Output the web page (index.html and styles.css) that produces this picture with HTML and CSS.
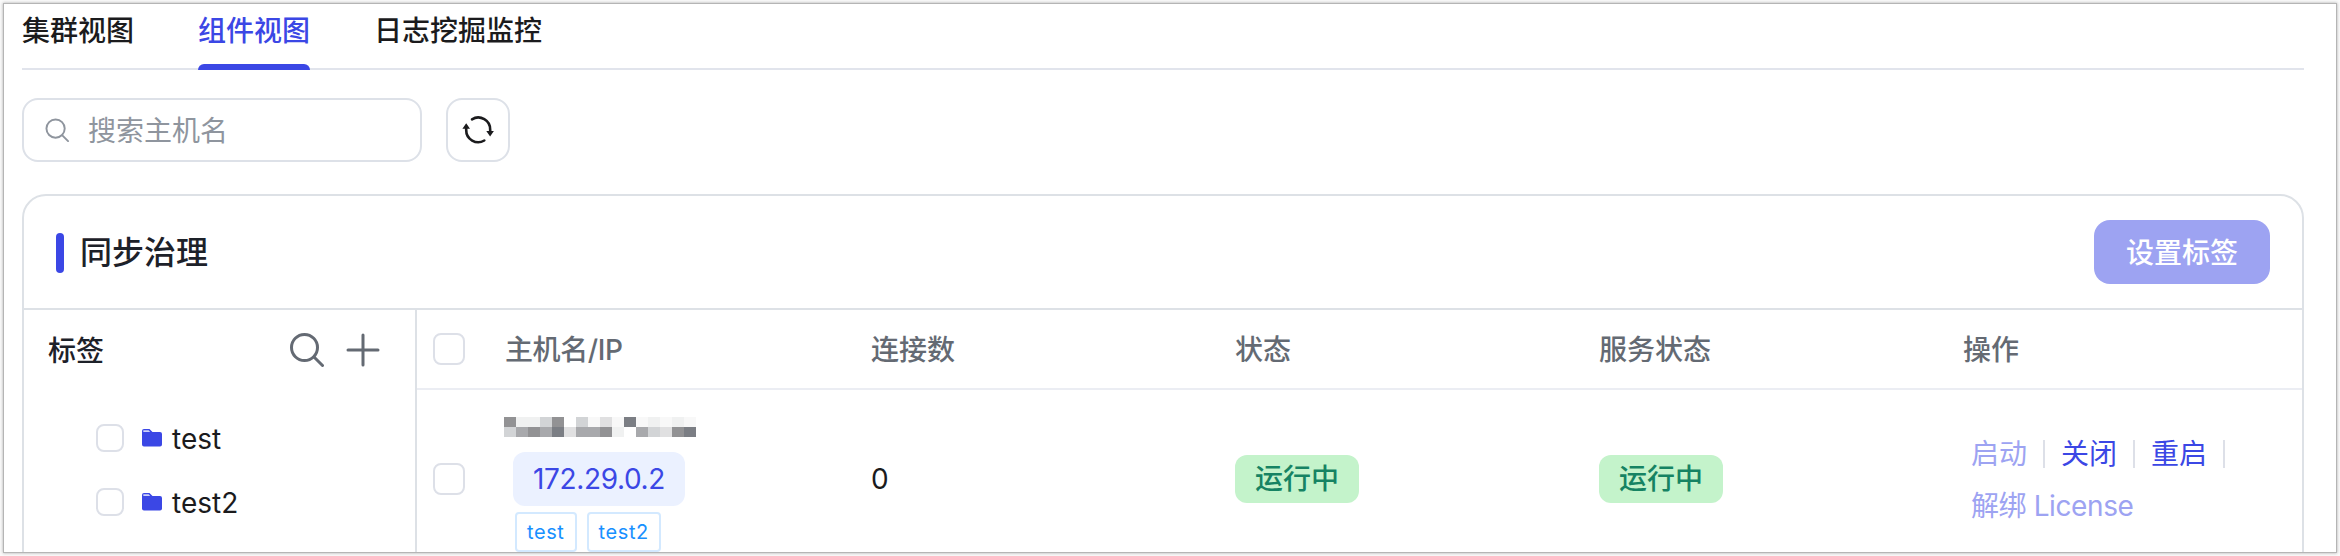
FILE: index.html
```html
<!DOCTYPE html>
<html lang="zh-CN">
<head>
<meta charset="utf-8">
<title>组件视图</title>
<link rel="stylesheet" href="styles.css">
</head>
<body>
<div class="window">
  <nav class="tabs">
    <a class="tab">集群视图</a>
    <a class="tab active">组件视图</a>
    <a class="tab">日志挖掘监控</a>
  </nav>
  <div class="toolbar">
    <div class="search">
      <svg class="search-icon" viewBox="0 0 26 26"><circle cx="11" cy="11" r="9.500"/><path d="M18 18l6 6"/></svg>
      <span>搜索主机名</span>
    </div>
    <button class="refresh">
      <svg viewBox="0 0 32 32"><path class="arc" d="M10 5.300A12 12 0 0 1 28.200 16v2M22.300 26.500A12 12 0 0 1 4.200 16v-2"/><path class="head" d="M24.300 17h7.600L28.100 22.500zM.4 14.800H8L4.200 9.300z"/></svg>
    </button>
  </div>
  <section class="card">
    <header class="card-head">
      <h2>同步治理</h2>
      <button class="primary">设置标签</button>
    </header>
    <div class="card-body">
      <aside class="tree">
        <div class="tree-head">
          <b>标签</b>
          <svg class="tool" viewBox="0 0 34 34"><circle cx="14.500" cy="14.500" r="13"/><path d="M24 24l8.500 8.500"/></svg>
          <svg class="tool" viewBox="0 0 34 34"><path d="M17 2v30M2 17h30"/></svg>
        </div>
        <div class="node"><i class="check small"></i><svg class="folder" viewBox="0 0 20 18"><path d="M0 2Q0 0 2 0h5.500l3 3H18q2 0 2 2v10.500q0 2-2 2H2q-2 0-2-2z"/><path class="flap" d="M1.300 1.300h5.400l1.500 1.700H1.300z"/></svg><span>test</span></div>
        <div class="node"><i class="check small"></i><svg class="folder" viewBox="0 0 20 18"><path d="M0 2Q0 0 2 0h5.500l3 3H18q2 0 2 2v10.500q0 2-2 2H2q-2 0-2-2z"/><path class="flap" d="M1.300 1.300h5.400l1.500 1.700H1.300z"/></svg><span>test2</span></div>
      </aside>
      <div class="table">
        <div class="row head-row">
          <i class="check"></i><span class="tight">主机名/IP</span><span>连接数</span><span>状态</span><span>服务状态</span><span>操作</span>
        </div>
        <div class="row data-row">
          <i class="check"></i>
          <div class="host">
            <svg class="mask" viewBox="0 0 192 20" shape-rendering="crispEdges">
              <g fill="#929294"><path d="M0 0h12v10H0z"/><path d="M48 0h12v10H48z"/><path d="M24 10h12v10H24z"/><path d="M96 10h12v10H96z"/><path d="M168 10h12v10h-12z"/></g>
              <g fill="#7b7e84"><path d="M120 0h12v10h-12z"/><path d="M48 10h12v10H48z"/><path d="M180 10h12v10h-12z"/></g>
              <g fill="#a8a9ac"><path d="M12 10h12v10H12z"/><path d="M36 10h12v10H36z"/><path d="M72 10h24v10H72z"/><path d="M132 10h12v10h-12z"/></g>
              <g fill="#d2d4d6"><path d="M36 0h12v10H36z"/><path d="M72 0h12v10H72z"/><path d="M0 10h12v10H0z"/><path d="M144 10h12v10h-12z"/></g>
              <g fill="#e0e0e1"><path d="M96 0h12v10H96z"/><path d="M60 10h12v10H60z"/><path d="M156 10h12v10h-12z"/></g>
              <g fill="#f0f1f1"><path d="M12 0h24v10H12z"/><path d="M144 0h12v10h-12z"/><path d="M168 0h12v10h-12z"/><path d="M108 10h12v10h-12z"/></g>
              <g fill="#f8f8f8"><path d="M84 0h12v10H84z"/><path d="M108 0h12v10h-12z"/><path d="M132 0h12v10h-12z"/><path d="M156 0h12v10h-12z"/><path d="M180 0h12v10h-12z"/></g>
            </svg>
            <span class="ip">172.29.0.2</span>
            <div class="labels"><span class="label">test</span><span class="label">test2</span></div>
          </div>
          <span>0</span>
          <span><em class="status">运行中</em></span>
          <span><em class="status">运行中</em></span>
          <div class="actions">
            <div class="line"><a class="off">启动</a><a>关闭</a><a>重启</a></div>
            <div class="tight"><a class="off">解绑 License</a></div>
          </div>
        </div>
      </div>
    </div>
  </section>
</div>
</body>
</html>
```
FILE: styles.css
```css
* { box-sizing: border-box; }
body {
  margin: 0;
  height: 556px;
  padding: 4px;
  overflow: hidden;
  background: #fafafa;
  color: #1b1b1d;
  font: 28px/40px Inter, "Noto Sans CJK SC", sans-serif;
}
button { border: 0; padding: 0; font: inherit; }
svg { display: block; flex: none; fill: none; }
.window {
  height: 548px;
  padding: 0 32px 0 18px;
  overflow: hidden;
  background: #fff;
  box-shadow: 0 0 0 1px #b5b5b5, 0 0 3px 1px #aaa;
}
.tabs {
  display: flex;
  gap: 64px;
  height: 66px;
  border-bottom: 2px solid #e1e4ec;
  font-weight: 500;
}
.tab {
  display: flex;
  flex-direction: column;
  justify-content: space-between;
  height: 66px;
  padding-top: 7px;
}
.tab.active { color: #3b47e5; }
.tab.active::after {
  content: "";
  height: 6px;
  border-radius: 6px 6px 0 0;
  background: #3b47e5;
}
.toolbar { display: flex; gap: 24px; padding: 28px 0 32px; }
.search, .refresh {
  display: flex;
  align-items: center;
  height: 64px;
  border: 2px solid #dde1e8;
  border-radius: 16px;
  background: #fff;
}
.search { width: 400px; gap: 18px; padding-left: 21px; color: #8f959e; }
.search span { padding-top: 1px; }
.search-icon { width: 25px; height: 25px; stroke: #8f959e; stroke-width: 2; stroke-linecap: round; }
.refresh { width: 64px; justify-content: center; }
.refresh svg { width: 32px; height: 32px; }
.arc { stroke: #1b1b1d; stroke-width: 2.6; stroke-linecap: round; }
.head { fill: #1b1b1d; }
.card {
  height: 420px;
  border: 2px solid #dde1e6;
  border-radius: 24px 24px 0 0;
}
.card-head {
  display: flex;
  align-items: center;
  justify-content: space-between;
  height: 114px;
  padding: 0 32px;
  border-bottom: 2px solid #dde1e6;
}
h2 {
  display: flex;
  align-items: center;
  gap: 16px;
  margin: 0;
  padding-top: 1px;
  color: #1d2129;
  font-size: 32px;
  font-weight: 500;
}
h2::before { content: ""; width: 8px; height: 40px; border-radius: 4px; background: #3b47e5; }
.primary {
  width: 176px;
  height: 64px;
  padding-top: 1px;
  border-radius: 16px;
  background: #9da3f2;
  color: #fff;
  font-weight: 500;
}
.card-body { display: flex; height: 320px; }
.tree { width: 393px; border-right: 2px solid #dde1e6; }
.tree-head {
  display: flex;
  align-items: center;
  gap: 22px;
  height: 80px;
  margin-bottom: 16px;
  padding: 0 35px 0 24px;
}
.tree-head b { flex: 1; padding-top: 1px; color: #1d2129; font-weight: 500; }
.tool { width: 34px; height: 34px; stroke: #646a73; stroke-width: 3; stroke-linecap: round; }
.node { display: flex; align-items: center; height: 64px; padding-left: 72px; }
.node span { padding-top: 2px; }
.check {
  flex: none;
  width: 32px;
  height: 32px;
  border: 2px solid #dde0e8;
  border-radius: 8px;
  background: #fff;
}
.check.small { width: 28px; height: 28px; }
.folder { width: 20px; height: 18px; margin: 0 10px 0 18px; fill: #3b47e5; }
.flap { fill: #cfd2f8; }
.table { flex: 1; }
.row {
  display: grid;
  grid-template-columns: 72px 366px 364px 364px 364px 1fr;
  align-items: center;
  padding-left: 16px;
}
.head-row { height: 80px; border-bottom: 2px solid #ebedf3; color: #646a73; font-weight: 500; }
.head-row span { padding-top: 1px; }
.tight { letter-spacing: -0.4px; }
.data-row { height: 178px; }
.host { display: flex; flex-direction: column; align-items: flex-start; padding-top: 11px; }
.mask { width: 192px; height: 20px; margin: 0 0 15px -1px; }
.ip {
  height: 54px;
  margin: 0 0 6px 8px;
  padding: 0 20px;
  border-radius: 12px;
  background: #ebf1ff;
  color: #3b47e5;
  letter-spacing: -0.35px;
  line-height: 54px;
}
.labels { display: flex; gap: 10px; margin-left: 10px; }
.label {
  height: 40px;
  padding: 0 10px;
  border: 2px solid #d3e9ff;
  border-radius: 4px;
  color: #1890ff;
  font-size: 20px;
  letter-spacing: 0.6px;
  line-height: 37px;
}
.status {
  display: inline-block;
  height: 48px;
  padding: 0 20px;
  border-radius: 12px;
  background: #c4f3cb;
  color: #168363;
  font-style: normal;
  font-weight: 500;
  line-height: 49px;
}
.actions { padding: 1px 0 0 8px; color: #3b47e5; line-height: 52px; }
.line { display: flex; align-items: center; }
.line a { display: flex; align-items: center; }
.line a::after { content: ""; width: 2px; height: 28px; margin: 0 16px; background: #dde0e8; }
.off { color: #9da3f2; }
```
